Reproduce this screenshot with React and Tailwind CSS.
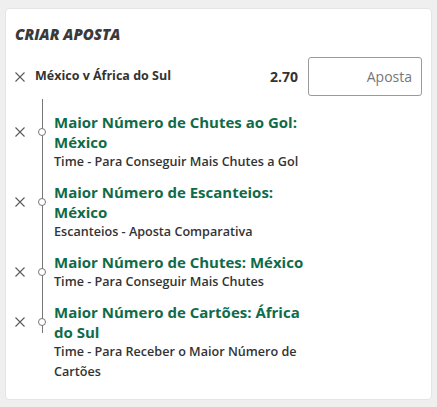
import React from "react";

const XIcon = () => (
  <svg width="10" height="10" viewBox="0 0 10 10" className="shrink-0">
    <path d="M0.5 0.5 L9.5 9.5 M9.5 0.5 L0.5 9.5" stroke="#5a5a5a" strokeWidth="1.1" fill="none" />
  </svg>
);

const selections = [
  { title: "Maior Número de Chutes ao Gol: México", market: "Time - Para Conseguir Mais Chutes a Gol" },
  { title: "Maior Número de Escanteios: México", market: "Escanteios - Aposta Comparativa" },
  { title: "Maior Número de Chutes: México", market: "Time - Para Conseguir Mais Chutes" },
  { title: "Maior Número de Cartões: África do Sul", market: "Time - Para Receber o Maior Número de Cartões" },
];

export default function App() {
  return (
    <div
      className="w-[437px] h-[407px] bg-[#efefef] pt-[8px] pl-[5px]"
      style={{ fontFamily: '"Open Sans", "Noto Sans", sans-serif' }}
    >
      <div className="w-[427px] h-[392px] bg-white rounded-[4px] border border-[#e4e4e4] px-[9px] pt-[15px]">
        {/* titulo */}
        <h2 className="text-[15px] leading-[20px] font-extrabold italic text-[#3a3a3a]">
          CRIAR APOSTA
        </h2>

        {/* jogo */}
        <div className="flex items-center mt-[13px] h-[39px]">
          <div className="w-[20px] flex items-center">
            <XIcon />
          </div>
          <span className="flex-1 text-[12.5px] font-bold text-[#333]">México v África do Sul</span>
          <span className="text-[14px] font-bold text-[#333] mr-[10px]">2.70</span>
          <div className="w-[114px] h-[39px] border border-[#9a9a9a] rounded-[3px] flex items-center justify-end pr-[9px]">
            <span className="text-[14px] text-[#777]">Aposta</span>
          </div>
        </div>

        {/* selecoes */}
        <div className="relative mt-[3px] pt-[13px]">
          <div className="absolute left-[27px] top-0 w-px h-[234px] bg-[#777]"></div>
          <div className="flex flex-col gap-[10px]">
            {selections.map((s, i) => (
              <div key={i} className="flex">
                <div className="w-[20px] h-[40px] flex items-center self-start">
                  <XIcon />
                </div>
                <div className="w-[14px] shrink-0 relative h-[40px] flex items-center justify-center self-start">
                  <div className="w-[8px] h-[8px] rounded-full border border-[#777] bg-white relative z-10"></div>
                </div>
                <div className="ml-[5px] w-[252px]">
                  <div className="text-[15px] leading-[20px] font-bold text-[#0f6b4a]">{s.title}</div>
                  <div className="text-[12.6px] leading-[20px] font-semibold text-[#333]">{s.market}</div>
                </div>
              </div>
            ))}
          </div>
        </div>
      </div>
    </div>
  );
}
